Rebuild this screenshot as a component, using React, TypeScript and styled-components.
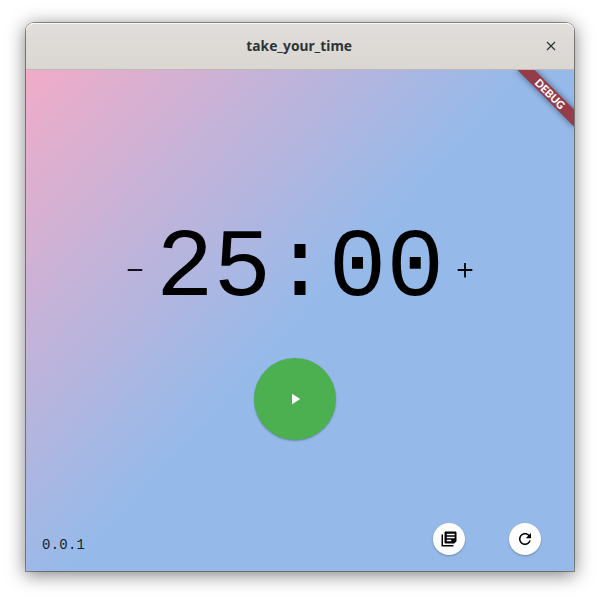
import React from "react";
import styled, { createGlobalStyle } from "styled-components";

const GlobalStyle = createGlobalStyle`
  * { box-sizing: border-box; }
  html, body { margin: 0; padding: 0; background: #fff; }
`;

const Desktop = styled.div`
  width: 600px;
  height: 600px;
  padding: 23px 26px 29px;
  overflow: hidden;
  background: #fff;
`;

const Window = styled.main`
  display: flex;
  flex-direction: column;
  width: 548px;
  height: 548px;
  border-radius: 8px 8px 0 0;
  box-shadow: 0 0 0 1px rgba(0, 0, 0, 0.38), 0 3px 18px 1px rgba(0, 0, 0, 0.5);
`;

const TitleBar = styled.header`
  display: grid;
  grid-template-columns: 46px 1fr 46px;
  align-items: center;
  justify-items: center;
  height: 47px;
  flex: none;
  border-radius: 8px 8px 0 0;
  border-bottom: 1px solid #bfb8b1;
  box-shadow: inset 0 1px #fbfafa;
  background: linear-gradient(to top, #dad6d2, #e1dedb);
`;

const Title = styled.h1`
  grid-column: 2;
  margin: 0 2px 2px 0;
  font: 700 14.67px/20px "Noto Sans", sans-serif;
  color: #2e3436;
  transform: scaleX(0.94);
`;

const CloseButton = styled.button`
  display: flex;
  padding: 0;
  border: 0;
  background: none;
  color: #2e3436;
`;

const Content = styled.section`
  position: relative;
  display: flex;
  flex-direction: column;
  flex: 1;
  overflow: hidden;
  background: linear-gradient(132.43deg, #f1acc8 0%, #95baea 50%);
`;

const TimerRow = styled.div`
  display: flex;
  align-items: center;
  justify-content: center;
  gap: 9px;
  margin-top: 145px;
  height: 109px;
`;

const Time = styled.time`
  font: 96px/109px "Liberation Mono", monospace;
  color: #000;
`;

const StepButton = styled.button`
  display: flex;
  padding: 0;
  border: 0;
  background: none;
  color: #000;
`;

const PlayButton = styled.button`
  display: flex;
  align-items: center;
  justify-content: center;
  width: 82px;
  height: 82px;
  margin: 34px 0 0 228px;
  padding: 0;
  border: 0;
  border-radius: 50%;
  background: #4caf50;
  color: #fff;
  box-shadow: 0 1px 2px rgba(0, 0, 0, 0.28);
`;

const Footer = styled.footer`
  display: flex;
  align-items: center;
  margin-top: auto;
  padding: 0 33px 16px 16px;
`;

const Version = styled.span`
  margin: 12px auto 0 0;
  font: 14px/16px "Liberation Mono", monospace;
  letter-spacing: 0.25px;
  color: rgba(0, 0, 0, 0.87);
`;

const RoundButton = styled.button`
  display: flex;
  align-items: center;
  justify-content: center;
  width: 32px;
  height: 32px;
  margin-left: 44px;
  padding: 0;
  border: 0;
  border-radius: 50%;
  background: #fff;
  color: #000;
  box-shadow: 0 1px 2px rgba(0, 0, 0, 0.28);
`;

const DebugBanner = styled.div`
  position: absolute;
  top: 18px;
  right: -16px;
  width: 80px;
  height: 12px;
  transform: rotate(45deg);
  background: #943c49;
  box-shadow: 0 0 6px rgba(0, 0, 0, 0.5);
  color: #fff;
  font: 900 10.8px/12px Lato, sans-serif;
  text-align: center;
`;

interface IconProps {
  path: string;
  size?: number;
}

const Icon = ({ path, size = 18 }: IconProps) => (
  <svg width={size} height={size} viewBox="0 0 24 24" fill="currentColor">
    <path d={path} />
  </svg>
);

const icons = {
  minus: "M19.3 12.9H4.7v-1.8h14.6z",
  plus: "M19.3 12.9h-6.4v6.6h-1.8v-6.6H4.7v-1.8h6.4V5h1.8v6.1h6.4z",
  play: "M8 5v14l11-7z",
  library:
    "M4 6H2v16h16v-2H4V6zm16.5-4h-13C6.7 2 6 2.7 6 3.5v13c0 .8.7 1.5 1.5 1.5H19l3-3V3.5c0-.8-.7-1.5-1.5-1.5zM19.5 11H9V9h10.500v2zm-4.500 4H9v-2h6v2zm4.500-8H9V5h10.500v2z",
  refresh:
    "M17.65 6.35C16.2 4.9 14.21 4 12 4c-4.42 0-7.99 3.58-7.99 8s3.57 8 7.99 8c3.73 0 6.84-2.55 7.73-6h-2.08c-.82 2.33-3.04 4-5.65 4-3.31 0-6-2.69-6-6s2.69-6 6-6c1.66 0 3.14.69 4.22 1.78L13 11h7V4l-2.35 2.35z",
};

export default function App() {
  return (
    <>
      <GlobalStyle />
      <Desktop>
        <Window>
          <TitleBar>
            <Title>take_your_time</Title>
            <CloseButton aria-label="Close">
              <svg width="10" height="10" viewBox="0 0 10 10" stroke="currentColor" strokeWidth="1.2">
                <path d="M1 1l8 8M9 1L1 9" />
              </svg>
            </CloseButton>
          </TitleBar>
          <Content>
            <TimerRow>
              <StepButton aria-label="Decrease">
                <Icon path={icons.minus} size={24} />
              </StepButton>
              <Time>25:00</Time>
              <StepButton aria-label="Increase">
                <Icon path={icons.plus} size={24} />
              </StepButton>
            </TimerRow>
            <PlayButton aria-label="Start">
              <Icon path={icons.play} />
            </PlayButton>
            <Footer>
              <Version>0.0.1</Version>
              <RoundButton aria-label="Log">
                <Icon path={icons.library} />
              </RoundButton>
              <RoundButton aria-label="Reset">
                <Icon path={icons.refresh} />
              </RoundButton>
            </Footer>
            <DebugBanner>DEBUG</DebugBanner>
          </Content>
        </Window>
      </Desktop>
    </>
  );
}
